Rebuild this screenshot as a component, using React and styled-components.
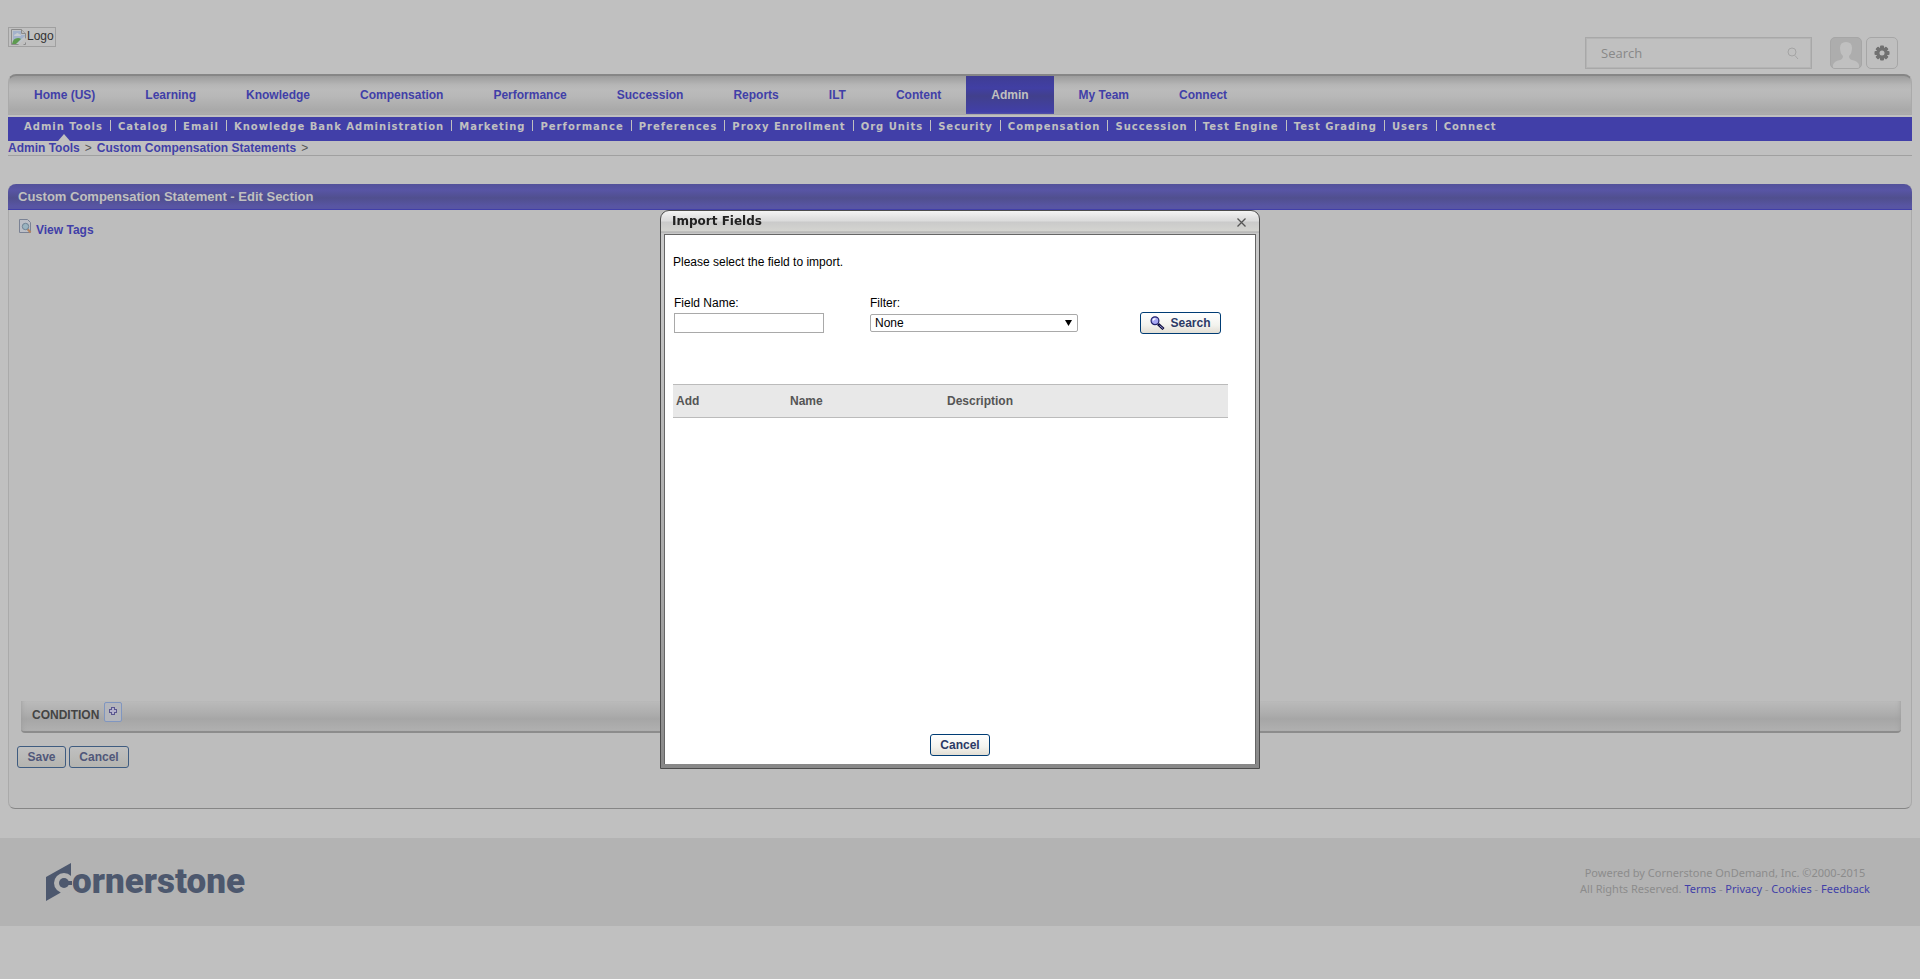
import React from "react";
import styled, { createGlobalStyle } from "styled-components";

const GlobalStyle = createGlobalStyle`
  * { box-sizing: border-box; }
  body { margin: 0; background: #c0c0c0; color: #333; font: 12px/16px "Liberation Sans", Arial, sans-serif; }
  a { text-decoration: none; color: inherit; }
  ul { list-style: none; margin: 0; padding: 0; }
  h1, h2, p { margin: 0; }
`;

const blue = "#413fa8";
const edge = "#a0a0a0";

const Main = styled.div`
  padding: 27px 8px 0;
`;

const Header = styled.header`
  display: flex;
  justify-content: space-between;
  align-items: flex-start;
  height: 47px;
  padding-right: 14px;
`;

const LogoLink = styled.a`
  display: flex;
  height: 20px;
  padding: 1px;
  border: 1px solid ${edge};
  line-height: 14px;
  svg { flex: none; }
`;

const Tools = styled.div`
  display: flex;
  padding-top: 10px;
  gap: 4px;
`;

const SiteSearch = styled.label`
  display: flex;
  align-items: center;
  width: 227px;
  height: 32px;
  margin-right: 14px;
  padding: 0 12px 0 15px;
  border: 1px solid #a8a8a8;
  box-shadow: inset 0 0 0 1px #b4b4b4;
  input {
    flex: 1;
    min-width: 0;
    padding: 0;
    border: 0;
    outline: 0;
    background: none;
    font: 13px/18px "Open Sans", "Segoe UI", sans-serif;
  }
  input::placeholder { color: #888; opacity: 1; }
`;

const ToolButton = styled.button`
  display: flex;
  align-items: flex-end;
  justify-content: center;
  width: 32px;
  height: 32px;
  padding: 0;
  overflow: hidden;
  border: 1px solid #a6a6a6;
  border-radius: 5px;
  background: ${(p) => (p.$filled ? "#adadad" : "#bfbfbf")};
`;

const MainNav = styled.nav`
  height: 41px;
  overflow: hidden;
  border: 1px solid #aaa;
  border-top: 2px solid #868686;
  border-radius: 8px 8px 0 0;
  background: linear-gradient(#9c9c9c, #b6b6b6 9px, #bbb 14px, #b8b8b8 20px, #a9a9a9 34px, #adadad);
  ul { display: flex; }
`;

const NavLink = styled.a`
  display: block;
  height: 39px;
  padding: 11px 25px 0;
  font-weight: bold;
  color: ${(p) => (p.$active ? "#c0c0c0" : blue)};
  background: ${(p) => (p.$active ? "linear-gradient(#3f3d93, #413fa4 12px, #41408c 20px, #413fa8 36px, #5c5aa8)" : "none")};
`;

const SubNav = styled.nav`
  height: 24px;
  margin-top: 2px;
  padding: 3px 0 0 9px;
  background: ${blue};
  ul { display: flex; }
  li { padding: 0 7px; border-left: 1px solid #c0c0c0; height: 11px; }
  li:first-child { border-left: 0; }
`;

const SubLink = styled.a`
  position: relative;
  display: block;
  font: bold 10px/13px "DejaVu Sans", Verdana, sans-serif;
  letter-spacing: 1px;
  color: #c0c0c0;
  &[aria-current]::after {
    content: "";
    position: absolute;
    left: 50%;
    top: 14px;
    margin-left: -5px;
    border: 6px solid transparent;
    border-top: 0;
    border-bottom: 7px solid #c0c0c0;
  }
`;

const Crumbs = styled.nav`
  display: flex;
  gap: 5px;
  height: 15px;
  border-bottom: 1px solid ${edge};
  line-height: 14px;
  color: #555;
  a { font-weight: bold; color: ${blue}; }
`;

const Panel = styled.section`
  margin-top: 28px;
  padding-bottom: 40px;
  border: 1px solid #aaa;
  border-top: 0;
  border-bottom-color: #868686;
  border-radius: 7px;
  background: #bdbdbd;
`;

const PanelTitle = styled.h1`
  margin: 0 -1px;
  height: 26px;
  padding: 0 10px;
  border-bottom: 1px solid ${blue};
  border-radius: 8px 8px 0 0;
  background: linear-gradient(#53519a, #5855a5 6px, #504f8e 14px, #5855a3 22px);
  font-size: 13px;
  line-height: 25px;
  color: #c0c0c0;
`;

const TagsLink = styled.a`
  display: flex;
  width: max-content;
  gap: 4px;
  padding: 9px 0 0 10px;
  font-weight: bold;
  color: ${blue};
  span { padding-top: 3px; }
`;

const Condition = styled.div`
  display: flex;
  gap: 5px;
  height: 32px;
  margin: 463px 10px 0 12px;
  padding: 0 11px;
  border-bottom: 2px solid #8c8c8c;
  border-radius: 0 0 4px 4px;
  background: linear-gradient(#bbb, #aeaeae 12px, #a6a6a6 18px, #b0b0b0);
  box-shadow: inset 5px 0 5px -5px #999, inset -5px 0 5px -5px #999;
  h2 { font-size: 12px; line-height: 28px; font-weight: bold; color: #444; }
`;

const AddButton = styled.button`
  display: flex;
  align-items: center;
  justify-content: center;
  width: 18px;
  height: 20px;
  margin-top: 1px;
  padding: 0 0 2px;
  border: 1px solid #8096c0;
  border-radius: 2px;
  background: #b4b6bc;
`;

const Actions = styled.div`
  display: flex;
  gap: 3px;
  padding: 13px 0 0 8px;
`;

const Button = styled.button`
  display: flex;
  align-items: center;
  justify-content: center;
  gap: 5px;
  width: ${(p) => p.$width}px;
  height: 22px;
  padding: 0;
  border: 1px solid ${(p) => (p.$dim ? "#3f5c80" : "#003c74")};
  border-radius: 3px;
  background: ${(p) => (p.$dim ? "linear-gradient(#c0c0c0, #b4b4b0)" : "linear-gradient(#fff, #f3f3ee 60%, #e2ded4)")};
  font: bold 12px/16px "Liberation Sans", Arial, sans-serif;
  color: ${(p) => (p.$dim ? "#50577a" : "#2c3a66")};
`;

const Footer = styled.footer`
  display: flex;
  align-items: center;
  justify-content: space-between;
  height: 88px;
  margin-top: 29px;
  padding: 0 50px 0 46px;
  background: #b3b3b3;
`;

const Legal = styled.p`
  padding-bottom: 2px;
  font: 11px/16px "Noto Sans", "Segoe UI", sans-serif;
  text-align: center;
  color: #8c8c8c;
  a { color: ${blue}; }
`;

const Overlay = styled.div`
  position: fixed;
  inset: 0;
  display: flex;
  align-items: center;
  justify-content: center;
`;

const Dialog = styled.div`
  display: flex;
  flex-direction: column;
  width: 600px;
  height: 559px;
  padding: 0 3px 4px;
  border: 1px solid #4c4c4c;
  border-radius: 9px 9px 0 0;
  background: linear-gradient(#f4f4f4, #dedede 8px, #dcdcdc 10px, #cacaca 11px, #d4d4d0 20px, #aaa 21px, #c8c8c8 22px, #c8c8c8 60px, #a4a4a4 70%, #888);
`;

const DialogBar = styled.div`
  display: flex;
  justify-content: space-between;
  height: 23px;
  padding: 2px 10px 0 8px;
  h2 { font: bold 12px/16px "DejaVu Sans", Verdana, sans-serif; color: #222; }
  button { display: flex; padding: 5px 0 0; border: 0; background: none; }
`;

const DialogBody = styled.div`
  display: flex;
  flex-direction: column;
  align-items: flex-start;
  flex: 1;
  padding: 19px 8px 8px;
  border: 1px solid #666;
  border-width: 1px 1px 0;
  background: #fff;
  color: #000;
`;

const Fields = styled.div`
  display: grid;
  grid-template-columns: 196px 270px auto;
  align-items: end;
  margin: 25px 0 0 1px;
`;

const Field = styled.label`
  display: flex;
  flex-direction: column;
  justify-content: space-between;
  height: 38px;
  width: ${(p) => p.$width}px;
  margin-bottom: 1px;
  input { width: 100%; height: 20px; border: 1px solid #a9a9a9; }
`;

const SelectBox = styled.span`
  position: relative;
  display: block;
  margin-bottom: 1px;
  select {
    appearance: none;
    display: block;
    width: 100%;
    height: 18px;
    padding: 0 4px;
    border: 1px solid #a9a9a9;
    border-radius: 2px;
    background: #fff;
    font: inherit;
    color: #000;
  }
  svg { position: absolute; right: 6px; top: 6px; pointer-events: none; }
`;

const Results = styled.table`
  width: 555px;
  margin-top: 50px;
  border-collapse: collapse;
  table-layout: fixed;
  th {
    height: 33px;
    padding: 0 3px;
    border: solid #bbb;
    border-width: 1px 0;
    background: #e8e8e8;
    text-align: left;
    color: #555;
  }
`;

const DialogActions = styled.div`
  display: flex;
  align-self: center;
  margin-top: auto;
`;

const Brand = styled.div`
  display: flex;
  align-items: center;
  color: #4d586e;
  font: 900 35px/40px Roboto, "Liberation Sans", sans-serif;
`;

const nav = ["Home (US)", "Learning", "Knowledge", "Compensation", "Performance", "Succession", "Reports", "ILT", "Content", "Admin", "My Team", "Connect"];
const subNav = ["Admin Tools", "Catalog", "Email", "Knowledge Bank Administration", "Marketing", "Performance", "Preferences", "Proxy Enrollment", "Org Units", "Security", "Compensation", "Succession", "Test Engine", "Test Grading", "Users", "Connect"];

const MissingImage = () => (
  <svg width="17" height="16" viewBox="0 0 17 16" aria-hidden="true">
    <path d="M1.500 .5h10l4 4v11h-14z" fill="#c0c4c8" stroke="#8b8b8b" />
    <path d="M3 2h8v4h4v1L7 14H3z" fill="#a3b2cb" />
    <path d="M4 7q0-2 2-2 1-2 3 0 2 0 2 2z" fill="#c8ccd2" />
    <path d="M2 15q1-6 6-6 2 0 3 1L6 15z" fill="#5d9a4f" />
    <path d="M8 16l9-8v4l-4 4z" fill="#c0c0c0" />
    <path d="M11.500.5v4h4" fill="#bbb" stroke="#8b8b8b" />
  </svg>
);

const SearchGlyph = () => (
  <svg width="12" height="13" viewBox="0 0 12 13" fill="none" stroke="#a4a4a4" aria-hidden="true">
    <circle cx="5" cy="5" r="4" />
    <path d="M8 8.500l3 3.500" />
  </svg>
);

const Person = () => (
  <svg width="30" height="30" viewBox="0 0 30 30" aria-hidden="true">
    <path d="M2 30V27q1-4 7-5 3-1 3-4-3-3-3-8 0-6 6-6t6 6q0 5-3 8 0 3 3 4 6 1 7 5v3z" fill="#c0c0c0" />
  </svg>
);

const Gear = () => (
  <svg width="16" height="30" viewBox="-8 -15 16 30" aria-hidden="true">
    <g fill="#717171">
      {[0, 45, 90, 135].map((a) => (
        <rect key={a} x="-2" y="-7.500" width="4" height="15" rx="1" transform={`rotate(${a})`} />
      ))}
      <circle r="5.500" />
    </g>
    <circle r="2.500" fill="#bfbfbf" />
  </svg>
);

const TagsIcon = () => (
  <svg width="13" height="15" viewBox="0 0 13 15" aria-hidden="true">
    <path d="M.5 .5h8l3 3v10H.5z" fill="#bcbfc6" stroke="#7a8294" />
    <path d="M8.500 10l3 3.500" stroke="#b8845c" strokeWidth="2" />
    <circle cx="6.500" cy="7.500" r="3.200" fill="#9ab4c0" stroke="#6f8294" />
  </svg>
);

const PlusIcon = () => (
  <svg width="8" height="8" viewBox="0 0 8 8" shapeRendering="crispEdges" aria-hidden="true">
    <path d="M2 0h4v2h2v4H6v2H2V6H0V2h2z" fill="#5a5690" />
    <path d="M3 1h2v2h2v2H5v2H3V5H1V3h2z" fill="#b4b2cc" />
  </svg>
);

const Magnifier = () => (
  <svg width="15" height="14" viewBox="0 0 15 14" aria-hidden="true">
    <path d="M8 8l5.500 5" stroke="#0c0c3c" strokeWidth="3" />
    <path d="M9.500 9.500l3.500 3" stroke="#9a9ad8" />
    <circle cx="5" cy="4.700" r="3.900" fill="#a8a8f4" stroke="#22226c" strokeWidth="1.200" />
    <path d="M3 4.500Q3.500 2.800 5.500 2.800" stroke="#fff" strokeWidth="1.400" fill="none" />
  </svg>
);

const CloseIcon = () => (
  <svg width="9" height="9" viewBox="0 0 9 9" stroke="#555" strokeWidth="1.300" aria-hidden="true">
    <path d="M.5 .5l8 8M8.500 .5l-8 8" />
  </svg>
);

const BrandMark = () => (
  <svg width="26" height="38" viewBox="0 0 26 38" aria-hidden="true">
    <path d="M0 14L25 0V16L14 30L0 38z" fill="#4d586e" />
    <circle cx="18" cy="20" r="10" fill="#b3b3b3" />
    <circle cx="18" cy="20" r="5" fill="#4d586e" />
    <path d="M18 18h8v4h-8z" fill="#4d586e" />
  </svg>
);

export default function App() {
  return (
    <>
      <GlobalStyle />
      <Main>
        <Header>
          <LogoLink href="#"><MissingImage /><span>Logo</span></LogoLink>
          <Tools>
            <SiteSearch>
              <input placeholder="Search" aria-label="Search" />
              <SearchGlyph />
            </SiteSearch>
            <ToolButton $filled aria-label="Profile"><Person /></ToolButton>
            <ToolButton aria-label="Settings"><Gear /></ToolButton>
          </Tools>
        </Header>
        <MainNav>
          <ul>{nav.map((t) => <li key={t}><NavLink href="#" $active={t === "Admin"}>{t}</NavLink></li>)}</ul>
        </MainNav>
        <SubNav>
          <ul>{subNav.map((t, i) => <li key={t}><SubLink href="#" aria-current={i === 0 ? "page" : undefined}>{t}</SubLink></li>)}</ul>
        </SubNav>
        <Crumbs>
          <a href="#">Admin Tools</a><span>&gt;</span><a href="#">Custom Compensation Statements</a><span>&gt;</span>
        </Crumbs>
        <Panel>
          <PanelTitle>Custom Compensation Statement - Edit Section</PanelTitle>
          <TagsLink href="#"><TagsIcon /><span>View Tags</span></TagsLink>
          <Condition>
            <h2>CONDITION</h2>
            <AddButton aria-label="Add condition"><PlusIcon /></AddButton>
          </Condition>
          <Actions>
            <Button $dim $width={49}>Save</Button>
            <Button $dim $width={60}>Cancel</Button>
          </Actions>
        </Panel>
      </Main>
      <Footer>
        <Brand><BrandMark />ornerstone</Brand>
        <Legal>
          Powered by Cornerstone OnDemand, Inc. ©2000-2015<br />
          All Rights Reserved. <a href="#">Terms</a> - <a href="#">Privacy</a> - <a href="#">Cookies</a> - <a href="#">Feedback</a>
        </Legal>
      </Footer>
      <Overlay>
        <Dialog role="dialog" aria-labelledby="import-title">
          <DialogBar>
            <h2 id="import-title">Import Fields</h2>
            <button aria-label="Close"><CloseIcon /></button>
          </DialogBar>
          <DialogBody>
            <p>Please select the field to import.</p>
            <Fields>
              <Field $width={150}>Field Name:<input /></Field>
              <Field $width={208}>Filter:
                <SelectBox>
                  <select><option>None</option></select>
                  <svg width="7" height="6" viewBox="0 0 7 6" aria-hidden="true"><path d="M0 0h7L3.500 6z" /></svg>
                </SelectBox>
              </Field>
              <Button $width={81}><Magnifier />Search</Button>
            </Fields>
            <Results>
              <colgroup><col width="114" /><col width="157" /><col /></colgroup>
              <thead><tr><th>Add</th><th>Name</th><th>Description</th></tr></thead>
            </Results>
            <DialogActions><Button $width={60}>Cancel</Button></DialogActions>
          </DialogBody>
        </Dialog>
      </Overlay>
    </>
  );
}
